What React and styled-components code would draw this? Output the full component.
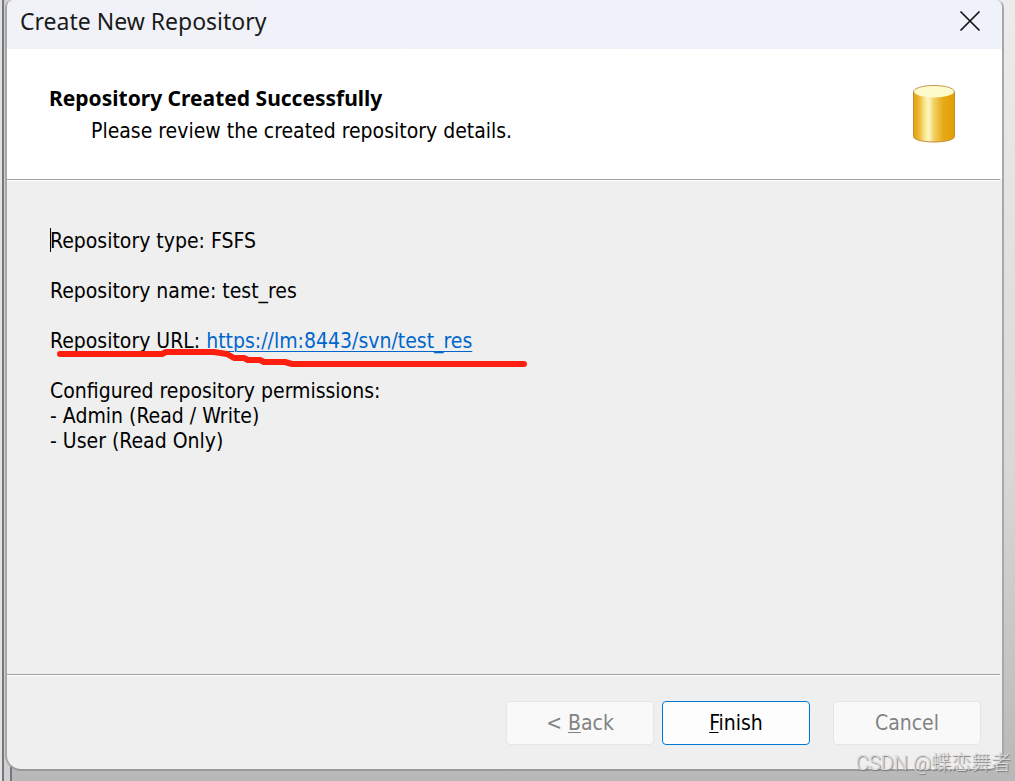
import React from 'react';
import styled, { createGlobalStyle } from 'styled-components'

const GlobalStyle = createGlobalStyle`
* {
    box-sizing: border-box;
}
body {
    margin: 0;
    font-family: "DejaVu Sans Condensed", "Noto Sans CJK SC", sans-serif;
    font-size: 21px;
    line-height: 25px;
    color: #000000;
}
`

const permissions = ['Admin (Read / Write)', 'User (Read Only)']

function CloseIcon() {
    return (
        <svg width="22" height="22" viewBox="0 0 22 22" aria-hidden="true">
            <path d="M1.500 1.500 20.500 20.500M20.500 1.500 1.500 20.500" fill="none" stroke="#111" strokeWidth="1.7" />
        </svg>
    )
}

function RepositoryIcon() {
    return (
        <svg width="42" height="58" viewBox="0 0 42 58" aria-hidden="true">
            <defs>
                <linearGradient id="drum" x1="0" x2="1" y1="0" y2="0">
                    <stop offset="0" stopColor="#e3a30c" />
                    <stop offset="0.12" stopColor="#ebb42c" />
                    <stop offset="0.3" stopColor="#fbeea0" />
                    <stop offset="0.38" stopColor="#fdf5bd" />
                    <stop offset="0.5" stopColor="#f2cf63" />
                    <stop offset="0.72" stopColor="#e6aa17" />
                    <stop offset="1" stopColor="#e2a000" />
                </linearGradient>
            </defs>
            <path d="M.5 7V51.5C.5 54.5 9 57 21 57S41.500 54.500 41.500 51.500V7Z" fill="url(#drum)" stroke="#c08c3c" strokeWidth="1" />
            <ellipse cx="21" cy="6.500" rx="20" ry="6" fill="#fdfacb" />
            <path d="M.5 7C.5 3.200 9.500 .5 21 .5S41.500 3.200 41.500 7" fill="none" stroke="#c3954f" strokeWidth="1" />
        </svg>
    )
}

function RedMark() {
    return (
        <Mark width="472" height="20" viewBox="0 0 472 20" aria-hidden="true">
            <path
                d="M3 7H105L109 5H157L170 7 177 11H187L191 13H203L207 15H228L235 17H467"
                fill="none"
                stroke="#ff1f10"
                strokeWidth="6"
                strokeLinecap="round"
                strokeLinejoin="round"
            />
        </Mark>
    )
}

export default function App() {
    return (
        <>
            <GlobalStyle />
            <Desktop>
                <Dialog role="dialog" aria-labelledby="dialog-title">
                    <TitleBar>
                        <Title id="dialog-title">Create New Repository</Title>
                        <CloseButton type="button" aria-label="Close">
                            <CloseIcon />
                        </CloseButton>
                    </TitleBar>
                    <Banner>
                        <div>
                            <Heading>Repository Created Successfully</Heading>
                            <SubHeading>Please review the created repository details.</SubHeading>
                        </div>
                        <RepositoryIcon />
                    </Banner>
                    <Divider />
                    <Details>
                        <Line>
                            <Caret />
                            Repository type: FSFS
                        </Line>
                        <Line>Repository name: test_res</Line>
                        <Line>
                            Repository URL: <Link href="https://lm:8443/svn/test_res">https://lm:8443/svn/test_res</Link>
                            <RedMark />
                        </Line>
                        <Line as="div">
                            Configured repository permissions:
                            {permissions.map((item) => (
                                <div key={item}>- {item}</div>
                            ))}
                        </Line>
                    </Details>
                    <Divider />
                    <Footer>
                        <Button type="button" disabled>
                            <span>&lt; <u>B</u>ack</span>
                        </Button>
                        <Button type="button" $primary>
                            <span><u>F</u>inish</span>
                        </Button>
                        <Button type="button" disabled $apart>Cancel</Button>
                    </Footer>
                </Dialog>
                <Watermark>CSDN @蝶恋舞者</Watermark>
            </Desktop>
        </>
    )
}

const Desktop = styled.div`
position: relative;
display: flex;
min-height: 100vh;
padding: 0 11px 10px 5px;
overflow: hidden;
background:
    linear-gradient(to right, #e2e2e2 2px, #74777d 2px, #74777d 4px, #d0d0d0 4px, #d0d0d0 10px, #74777d 10px, #74777d 12px, transparent 12px),
    linear-gradient(#ececec, #d8d8d8 60%, #b8b8b8);
`

const Dialog = styled.main`
flex: 1;
display: flex;
flex-direction: column;
border: 2px solid #a8a8a8;
border-top: none;
border-bottom-color: #9a9a9a;
border-radius: 8px 8px 16px 16px;
overflow: hidden;
background: #efefef;
`

const TitleBar = styled.header`
display: flex;
align-items: center;
justify-content: space-between;
height: 49px;
padding: 0 21px 8px 13px;
background: linear-gradient(to right, #f1f2f8, #eff2fb);
`

const Title = styled.h1`
margin: 0;
font-family: "Noto Sans", sans-serif;
font-size: 23px;
font-weight: 400;
line-height: 32px;
color: #1a1a1a;
`

const CloseButton = styled.button`
display: flex;
padding: 0;
border: none;
background: transparent;
`

const Banner = styled.section`
display: flex;
justify-content: space-between;
align-items: flex-start;
height: 130px;
padding: 36px 47px 0 42px;
background: #ffffff;
`

const Heading = styled.h2`
margin: 0;
font-family: "Noto Sans", sans-serif;
font-size: 21px;
line-height: 26px;
font-weight: 700;
`

const SubHeading = styled.p`
margin: 8px 0 0 42px;
`

const Divider = styled.hr`
width: calc(100% - 2px);
height: 2px;
margin: 0;
border: none;
border-top: 1px solid #a0a0a0;
background: #ffffff;
`

const Details = styled.section`
flex: 1;
display: flex;
flex-direction: column;
gap: 25px;
padding: 48px 43px;
`

const Line = styled.p`
position: relative;
margin: 0;
`

const Caret = styled.span`
position: absolute;
top: -1px;
left: 0;
width: 1px;
height: 24px;
background: #000000;
`

const Link = styled.a`
color: #0066cc;
text-decoration: underline;
text-decoration-thickness: 1px;
text-underline-offset: 3px;
`

const Mark = styled.svg`
position: absolute;
top: 18px;
left: 7px;
`

const Footer = styled.footer`
display: flex;
justify-content: flex-end;
gap: 8px;
padding: 25px 21px 24px;
`

const Button = styled.button`
width: 148px;
height: 44px;
margin-left: ${(props) => (props.$apart ? '15px' : '0')};
border: 1px solid ${(props) => (props.$primary ? '#0078d4' : '#e6e6e6')};
border-radius: 4px;
background: ${(props) => (props.$primary ? '#fdfdfd' : '#f9f9f9')};
font-family: inherit;
font-size: 21px;
color: ${(props) => (props.disabled ? '#838383' : '#000000')};
u {
    text-decoration-thickness: 1px;
    text-underline-offset: 2px;
}
`

const Watermark = styled.div`
position: absolute;
right: 4px;
bottom: 4px;
font-family: Roboto, "Noto Sans CJK SC", sans-serif;
font-size: 20px;
font-weight: 300;
line-height: 28px;
color: #dcdcdc;
text-shadow: 1px 1px 1px #777777;
`
